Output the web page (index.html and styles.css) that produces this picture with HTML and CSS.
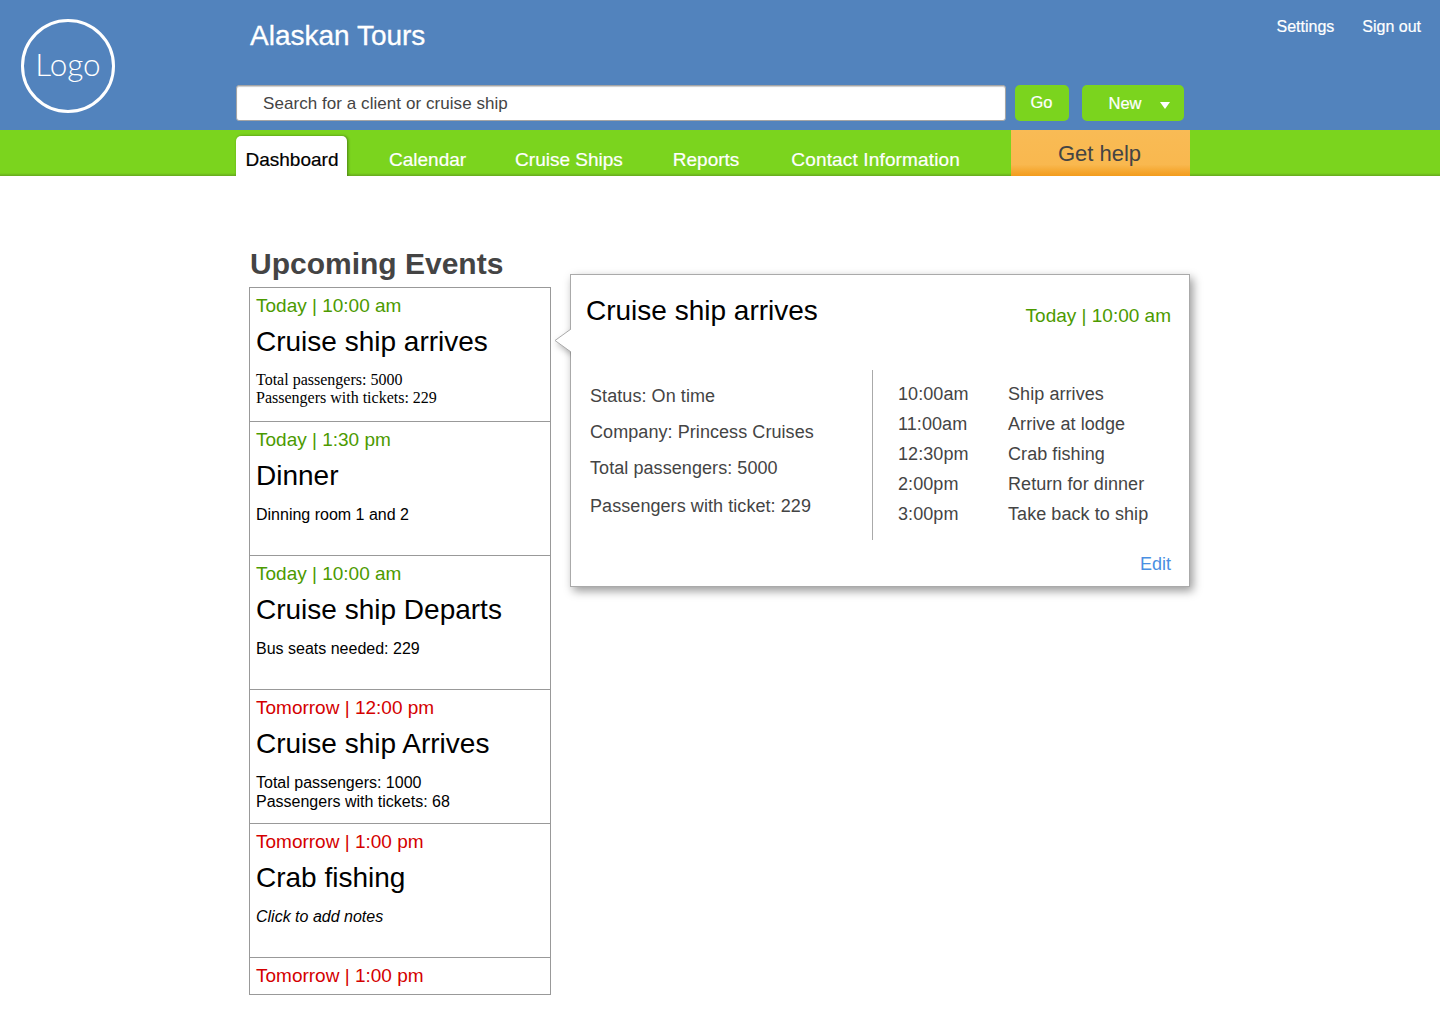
FILE: index.html
```html
<!DOCTYPE html>
<html lang="en">
<head>
    <meta charset="UTF-8">
    <meta name="viewport" content="width=device-width, initial-scale=1.0">
    <title>Alaskan Tours - Dashboard</title>
    <link rel="stylesheet" href="styles.css">
</head>
<body>
    <header class="topbar">
        <div class="logo-col">
            <div class="logo">Logo</div>
        </div>
        <div class="top-main">
            <div class="brand">Alaskan Tours</div>
            <form class="search-row">
                <div class="search-box">Search for a client or cruise ship</div>
                <button type="button" class="btn btn-go">Go</button>
                <button type="button" class="btn btn-new">New <span class="caret"></span></button>
            </form>
        </div>
        <div class="user-links">
            <a href="#">Settings</a>
            <a href="#">Sign out</a>
        </div>
    </header>
    <nav class="navbar">
        <div class="tabs">
            <a href="#" class="tab tab-active">Dashboard</a>
            <a href="#" class="tab tab-calendar">Calendar</a>
            <a href="#" class="tab tab-ships">Cruise Ships</a>
            <a href="#" class="tab tab-reports">Reports</a>
            <a href="#" class="tab tab-contact">Contact Information</a>
        </div>
        <a href="#" class="help">Get help</a>
    </nav>
    <main class="content">
        <section class="events">
            <h2>Upcoming Events</h2>
            <ul class="event-list">
                <li class="event">
                    <div class="when today">Today | 10:00 am</div>
                    <h3>Cruise ship arrives</h3>
                    <p class="serif">Total passengers: 5000<br>Passengers with tickets: 229</p>
                </li>
                <li class="event">
                    <div class="when today">Today | 1:30 pm</div>
                    <h3>Dinner</h3>
                    <p>Dinning room 1 and 2</p>
                </li>
                <li class="event">
                    <div class="when today">Today | 10:00 am</div>
                    <h3>Cruise ship Departs</h3>
                    <p>Bus seats needed: 229</p>
                </li>
                <li class="event">
                    <div class="when tomorrow">Tomorrow | 12:00 pm</div>
                    <h3>Cruise ship Arrives</h3>
                    <p>Total passengers: 1000<br>Passengers with tickets: 68</p>
                </li>
                <li class="event">
                    <div class="when tomorrow">Tomorrow | 1:00 pm</div>
                    <h3>Crab fishing</h3>
                    <p class="note">Click to add notes</p>
                </li>
                <li class="event event-last">
                    <div class="when tomorrow">Tomorrow | 1:00 pm</div>
                </li>
            </ul>
        </section>
        <section class="detail">
            <svg class="detail-arrow" width="17" height="24" viewBox="0 0 17 24">
                <polygon points="17,0 16,0 0,11.5 16,23 17,23" fill="#FFFFFF"/>
                <polyline points="16,0 0,11.5 16,23" fill="none" stroke="#AAAAAA"/>
            </svg>
            <div class="detail-head">
                <h3>Cruise ship arrives</h3>
                <div class="when today">Today | 10:00 am</div>
            </div>
            <div class="detail-body">
                <div class="facts">
                    <p>Status: On time</p>
                    <p>Company: Princess Cruises</p>
                    <p>Total passengers: 5000</p>
                    <p class="facts-last">Passengers with ticket: 229</p>
                </div>
                <ul class="schedule">
                    <li><span>10:00am</span><span>Ship arrives</span></li>
                    <li><span>11:00am</span><span>Arrive at lodge</span></li>
                    <li><span>12:30pm</span><span>Crab fishing</span></li>
                    <li><span>2:00pm</span><span>Return for dinner</span></li>
                    <li><span>3:00pm</span><span>Take back to ship</span></li>
                </ul>
            </div>
            <a href="#" class="edit">Edit</a>
        </section>
    </main>
</body>
</html>
```

FILE: styles.css
```css
body {
    font-family: "Liberation Sans", Arial, sans-serif;
    margin: 0;
    padding: 0;
    background-color: #FFFFFF;
    color: #000000;
}

a {
    text-decoration: none;
}

/* top blue bar */
.topbar {
    display: flex;
    height: 130px;
    background: #5283BD;
    color: #FFFFFF;
}

.logo-col {
    width: 236px;
    flex: none;
    padding: 19px 0 0 21px;
    box-sizing: border-box;
}

.logo {
    width: 94px;
    height: 94px;
    box-sizing: border-box;
    border: 3px solid #FFFFFF;
    border-radius: 50%;
    padding-bottom: 4px;
    display: flex;
    align-items: center;
    justify-content: center;
    font-family: "Lato", sans-serif;
    font-size: 31.5px;
    font-weight: 300;
}

.top-main {
    width: 948px;
    flex: none;
}

.brand {
    font-size: 28px;
    line-height: 32px;
    padding: 20px 0 0 14px;
    height: 65px;
    box-sizing: border-box;
    -webkit-text-stroke: 0.3px #FFFFFF;
}

.search-row {
    display: flex;
    align-items: flex-start;
    margin: 20px 0 0;
}

.search-box {
    width: 770px;
    height: 36px;
    box-sizing: border-box;
    background: #FFFFFF;
    border: 1px solid #A5A5A5;
    border-radius: 3px;
    box-shadow: inset 0 1px 1px rgba(0, 0, 0, 0.2);
    padding-left: 26px;
    font-size: 17px;
    letter-spacing: 0.06px;
    line-height: 36px;
    color: #444444;
}

.btn {
    font-family: inherit;
    height: 36px;
    border: none;
    border-radius: 5px;
    background: #7BD41E;
    color: #FFFFFF;
    font-size: 16.5px;
    padding: 0;
    -webkit-text-stroke: 0.2px #FFFFFF;
}

.btn-go {
    width: 54px;
    margin-left: 9px;
    padding-bottom: 1px;
    padding-right: 1px;
}

.btn-new {
    width: 102px;
    margin-left: 13px;
    padding-top: 1px;
    padding-right: 16px;
    position: relative;
}

.caret {
    position: absolute;
    right: 14px;
    top: 17px;
    border-left: 5.5px solid transparent;
    border-right: 5.5px solid transparent;
    border-top: 7px solid #FFFFFF;
}

.user-links {
    margin-left: auto;
    display: flex;
    gap: 28px;
    padding: 18px 19px 0 0;
    font-size: 16px;
    -webkit-text-stroke: 0.2px #FFFFFF;
}

.user-links a {
    color: #FFFFFF;
}

/* green nav */
.navbar {
    display: flex;
    height: 46px;
    padding-left: 236px;
    overflow: hidden;
    background: linear-gradient(#7BD41E 43px, #66A81E);
}

.tabs {
    width: 775px;
    display: flex;
    align-items: flex-end;
}

.tab {
    color: #FFFFFF;
    font-size: 19px;
    line-height: 48px;
    height: 40px;
    -webkit-text-stroke: 0.2px #FFFFFF;
}

.tab-active {
    width: 111px;
    padding-left: 1px;
    box-sizing: border-box;
    text-align: center;
    background: #FFFFFF;
    color: #000000;
    border-radius: 5px 5px 0 0;
    box-shadow: 1px 0 3px rgba(0, 0, 0, 0.4);
    -webkit-text-stroke: 0.2px #000000;
}

.tab-calendar { margin-left: 42px; }
.tab-ships { margin-left: 49px; }
.tab-reports { margin-left: 50px; }
.tab-contact { margin-left: 52px; letter-spacing: 0.15px; }

.help {
    width: 177px;
    padding-right: 2px;
    text-align: center;
    font-size: 22px;
    line-height: 47px;
    color: #444444;
    background: linear-gradient(#F9BB55 0%, #F9B84F 75%, #F39C1C 100%);
}

/* page content */
.content {
    display: flex;
    align-items: flex-start;
    padding: 68px 0 0 249px;
}

.events {
    width: 302px;
    flex: none;
}

.events h2 {
    margin: 0 0 4px;
    padding-left: 1px;
    font-size: 30px;
    line-height: 39px;
    color: #444444;
}

.event-list {
    list-style: none;
    margin: 0;
    padding: 0;
    border: 1px solid #999999;
}

.event {
    height: 134px;
    box-sizing: border-box;
    padding: 6px 6px 0;
    border-bottom: 1px solid #999999;
}

.event-last {
    height: 36px;
    border-bottom: none;
}

.when {
    font-size: 19px;
    line-height: 24px;
}

.today { color: #4C9A00; }
.tomorrow { color: #D40000; }

.event h3 {
    margin: 0;
    font-size: 28px;
    font-weight: normal;
    line-height: 34px;
    padding-top: 7px;
}

.event p {
    margin: 0;
    padding-top: 12px;
    font-size: 16px;
    line-height: 19px;
}

.event p.serif {
    font-family: "Liberation Serif", "Times New Roman", serif;
    line-height: 18px;
}

.event p.note {
    font-style: italic;
}

/* popover */
.detail {
    position: relative;
    width: 620px;
    height: 313px;
    box-sizing: border-box;
    margin: 30px 0 0 19px;
    padding: 19px 18px 0 15px;
    background: #FFFFFF;
    border: 1px solid #AAAAAA;
    box-shadow: 3px 4px 9px rgba(0, 0, 0, 0.4);
    color: #444444;
}

.detail-arrow {
    position: absolute;
    left: -16px;
    top: 54px;
    overflow: visible;
    filter: drop-shadow(2px 3px 3px rgba(0, 0, 0, 0.3));
    clip-path: inset(-6px 1px -8px -6px);
}

.detail-head {
    display: flex;
    justify-content: space-between;
    align-items: flex-start;
    height: 76px;
}

.detail-head h3 {
    margin: 0;
    font-size: 28px;
    font-weight: normal;
    line-height: 34px;
    color: #000000;
}

.detail-head .when {
    padding-top: 10px;
}

.detail-body {
    display: flex;
}

.facts {
    width: 287px;
    height: 170px;
    box-sizing: border-box;
    padding: 16px 0 0 4px;
    border-right: 1px solid #AAAAAA;
    font-size: 18px;
    letter-spacing: 0.07px;
}

.facts p {
    margin: 0 0 15px;
    line-height: 21px;
}

.facts p.facts-last {
    margin-top: 17px;
}

.schedule {
    list-style: none;
    margin: 0;
    padding: 9px 0 0 25px;
    font-size: 18px;
    letter-spacing: 0.07px;
}

.schedule li {
    display: flex;
    height: 30px;
    line-height: 30px;
}

.schedule li span:first-child {
    width: 110px;
}

.edit {
    position: absolute;
    right: 18px;
    bottom: 11px;
    font-size: 18px;
    color: #4A8FE2;
}
```
